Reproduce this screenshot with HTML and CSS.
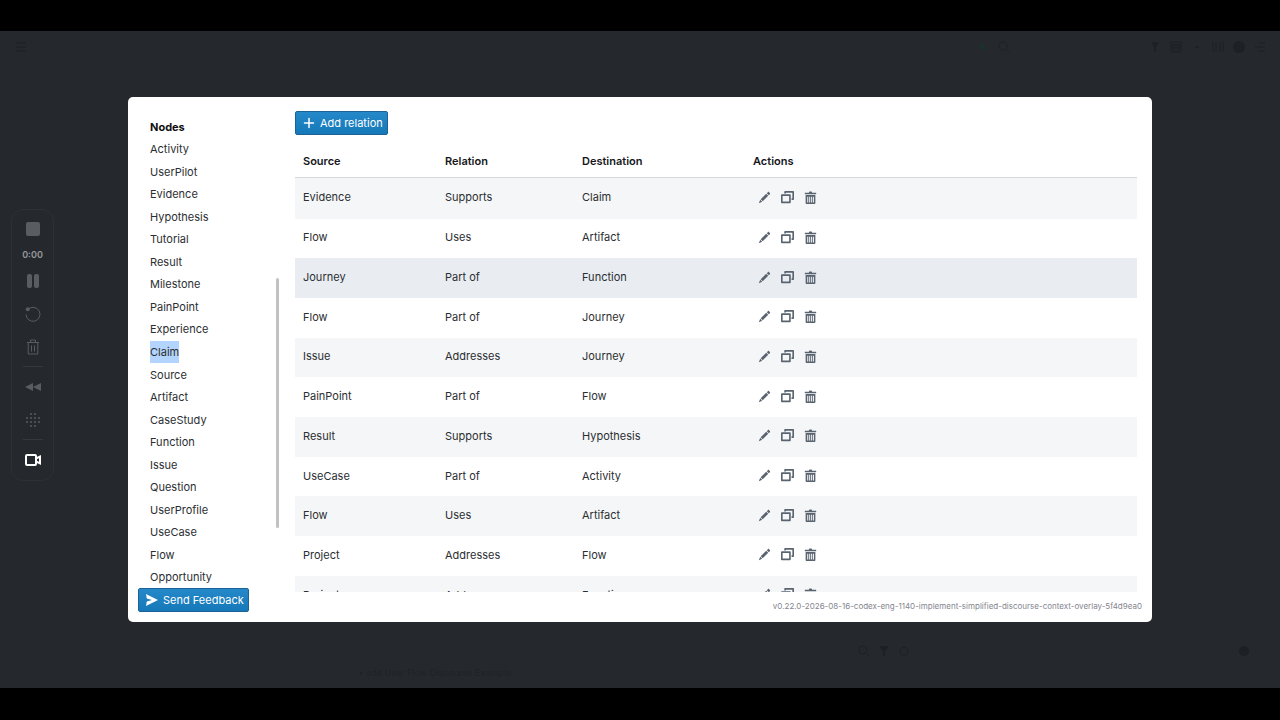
FILE: index.html
```html
<!DOCTYPE html>
<html lang="en">
<head>
    <meta charset="UTF-8">
    <meta name="viewport" content="width=device-width, initial-scale=1.0">
    <link rel="stylesheet" href="styles.css">
    <title>Discourse Graph Settings</title>
</head>
<body>
    <!-- icon shapes, used with <use> below -->
    <svg class="sprite" aria-hidden="true">
        <symbol id="i-pencil" viewBox="0 0 16 16">
            <path d="M3.3 10.2l6.8-6.8 2.5 2.5-6.8 6.8zM1 15l1.7-4.2 2.5 2.5zM13.3 5.2l1.3-1.3c.5-.5.4-1.1 0-1.5l-1-1c-.4-.4-1-.5-1.5 0l-1.3 1.3z"/>
        </symbol>
        <symbol id="i-copy" viewBox="0 0 16 16">
            <path d="M15 0H5c-.6 0-1 .4-1 1v2h2V2h8v7h-1v2h2c.6 0 1-.4 1-1V1c0-.6-.4-1-1-1zm-4 4H1c-.6 0-1 .4-1 1v9c0 .6.4 1 1 1h10c.6 0 1-.4 1-1V5c0-.6-.4-1-1-1zm-1 9H2V6h8v7z"/>
        </symbol>
        <symbol id="i-trash" viewBox="0 0 16 16">
            <path fill-rule="evenodd" d="M14.5 2H10c0-.8-.7-1.500-1.500-1.500h-1C6.700.5 6 1.200 6 2H1.500c-.3 0-.5.2-.5.5V4h14V2.500c0-.3-.2-.5-.5-.5zM2 5v10c0 .6.4 1 1 1h10c.6 0 1-.4 1-1V5zm3.200 9H4V7h1.200zm2.400 0H6.400V7h1.200zm2.400 0H8.800V7H10zm2.200 0H11V7h1.200z"/>
        </symbol>
    </svg>

    <div class="app">
        <header class="topbar">
            <svg viewBox="0 0 12 12"><path d="M1 2h10M1 6h10M1 10h10"/></svg>
            <div class="top_icons">
                <i class="sync"></i>
                <svg class="search" viewBox="0 0 14 14"><circle cx="6" cy="6" r="5"/><path d="M10 10l3 3"/></svg>
                <svg viewBox="0 0 12 12"><path class="fill" d="M2 1h8L7 6v5H5V6z"/></svg>
                <svg viewBox="0 0 12 12"><path d="M1 1h10v10H1zM1 4h10M1 7h10M4 4v7M8 4v7"/></svg>
                <svg viewBox="0 0 12 12"><path class="fill" d="M4 6h1V5h2v1h1v1H4z"/></svg>
                <svg viewBox="0 0 12 12"><path d="M1 1v10M4 1v10M8 1v10M11 1v10"/></svg>
                <svg viewBox="0 0 12 12"><circle class="fill" cx="6" cy="6" r="6"/></svg>
                <svg viewBox="0 0 12 12"><path d="M4 2h7M1 6h10M4 10h7"/></svg>
            </div>
        </header>

        <div class="recorder">
            <button aria-label="Stop"><svg viewBox="0 0 16 16"><rect class="fill" x="1" y="1" width="14" height="14" rx="2"/></svg></button>
            <span class="time">0:00</span>
            <button aria-label="Pause"><svg viewBox="0 0 16 16"><rect class="fill" x="2" y="1" width="5" height="14" rx="2"/><rect class="fill" x="9" y="1" width="5" height="14" rx="2"/></svg></button>
            <button aria-label="Restart"><svg viewBox="0 0 16 16"><path d="M3.200 3.200A7 7 0 1 1 1 8.500"/><circle class="fill" cx="2.800" cy="3.200" r="2"/></svg></button>
            <button aria-label="Delete"><svg viewBox="0 0 16 16"><path d="M2 3.500h12M5.500 3.500V1h5v2.500M3.200 3.500V15h9.600V3.500M6.500 6.500v6M9.500 6.500v6"/></svg></button>
            <hr>
            <button aria-label="Rewind"><svg viewBox="0 0 16 16"><path class="fill" d="M8 4v8L0 8zM16 4v8L8 8z"/></svg></button>
            <button aria-label="Blur"><svg class="dots" viewBox="0 0 16 16"><path d="M6 2h0M10 2h0M2 6h0M6 6h0M10 6h0M14 6h0M2 10h0M6 10h0M10 10h0M14 10h0M6 14h0M10 14h0"/></svg></button>
            <hr>
            <button class="camera" aria-label="Camera"><svg viewBox="0 0 16 16"><rect x="1" y="3" width="10" height="10" rx="1"/><path d="M11 6.500l4-2v7l-4-2z"/></svg></button>
        </div>

        <div class="dialog" role="dialog" aria-label="Settings">
            <div class="panes">
                <nav class="sidebar">
                    <h2>Nodes</h2>
                    <a href="#">Activity</a>
                    <a href="#">UserPilot</a>
                    <a href="#">Evidence</a>
                    <a href="#">Hypothesis</a>
                    <a href="#">Tutorial</a>
                    <a href="#">Result</a>
                    <a href="#">Milestone</a>
                    <a href="#">PainPoint</a>
                    <a href="#">Experience</a>
                    <a href="#" class="selected">Claim</a>
                    <a href="#">Source</a>
                    <a href="#">Artifact</a>
                    <a href="#">CaseStudy</a>
                    <a href="#">Function</a>
                    <a href="#">Issue</a>
                    <a href="#">Question</a>
                    <a href="#">UserProfile</a>
                    <a href="#">UseCase</a>
                    <a href="#">Flow</a>
                    <a href="#">Opportunity</a>
                    <i class="scroll_thumb"></i>
                </nav>

                <main class="content">
                    <button class="primary">
                        <svg viewBox="0 0 16 16"><path d="M8 2v12M2 8h12" stroke="currentColor" stroke-width="2" stroke-linecap="round"/></svg>
                        Add relation
                    </button>
                    <table>
                        <thead>
                            <tr><th class="source">Source</th><th class="relation">Relation</th><th class="destination">Destination</th><th>Actions</th></tr>
                        </thead>
                        <tbody id="relations"></tbody>
                    </table>
                </main>
            </div>

            <footer>
                <button class="primary">
                    <svg viewBox="0 0 16 16"><path fill="currentColor" d="M0 0l16 8-16 8 1-6 7-2-7-2z"/></svg>
                    Send Feedback
                </button>
                <span class="version">v0.22.0-2026-08-16-codex-eng-1140-implement-simplified-discourse-context-overlay-5f4d9ea0</span>
            </footer>
        </div>

        <div class="block_text">• add User Flow Discourse Example</div>
        <div class="bottombar">
            <svg viewBox="0 0 12 12"><circle cx="5" cy="5" r="4"/><path d="M8 8l3 3"/></svg>
            <svg viewBox="0 0 12 12"><path class="fill" d="M1 1h10L7 6v5H5V6z"/></svg>
            <svg viewBox="0 0 12 12"><circle cx="6" cy="6" r="4"/></svg>
            <svg class="help" viewBox="0 0 12 12"><circle class="fill" cx="6" cy="6" r="5"/></svg>
        </div>
    </div>

    <script>
        const relations=[
            ['Evidence','Supports','Claim'],
            ['Flow','Uses','Artifact'],
            ['Journey','Part of','Function'],
            ['Flow','Part of','Journey'],
            ['Issue','Addresses','Journey'],
            ['PainPoint','Part of','Flow'],
            ['Result','Supports','Hypothesis'],
            ['UseCase','Part of','Activity'],
            ['Flow','Uses','Artifact'],
            ['Project','Addresses','Flow'],
            ['Project','Addresses','Function']
        ]

        const icon=(name,label)=>`<button aria-label="${label}"><svg viewBox="0 0 16 16"><use href="#i-${name}"/></svg></button>`

        document.getElementById('relations').innerHTML=relations.map((r,i)=>
            `<tr${i===2 ? ' class="hovered"' : ''}>
                <td>${r[0]}</td><td>${r[1]}</td><td>${r[2]}</td>
                <td><div class="actions">${icon('pencil','Edit')}${icon('copy','Duplicate')}${icon('trash','Delete')}</div></td>
            </tr>`).join('')
    </script>
</body>
</html>
```
FILE: styles.css
```css
*{
    box-sizing: border-box;
}
body{
    margin: 0;
    height: 100vh;
    padding: 31px 0 32px;
    background: #000;
    font-family: Inter, "Liberation Sans", sans-serif;
    font-size: 11px;
    line-height: 16px;
    color: #2b2e32;
}
button{
    font: inherit;
    border: none;
    background: none;
    padding: 0;
    cursor: pointer;
}
.sprite{
    display: none;
}
.app{
    position: relative;
    height: 100%;
    display: flex;
    align-items: center;
    justify-content: center;
    background: #25292d;
    overflow: hidden;
}

/* dimmed app behind the dialog */
.topbar{
    position: absolute;
    top: 10px;
    left: 15px;
    right: 14px;
    display: flex;
    justify-content: space-between;
}
.topbar svg, .bottombar svg{
    width: 12px;
    height: 12px;
    fill: none;
    stroke: #1d2024;
}
.topbar .fill, .bottombar .fill{
    fill: #1d2024;
    stroke: none;
}
.top_icons{
    display: flex;
    align-items: center;
    gap: 9px;
}
.sync{
    width: 6px;
    height: 6px;
    border-radius: 50%;
    background: #1c302c;
    margin-right: 4px;
}
.top_icons .search{
    margin-right: 130px;
}
.bottombar{
    position: absolute;
    bottom: 31px;
    left: 67%;
    right: 30px;
    display: flex;
    gap: 8px;
}
.bottombar .help{
    margin-left: auto;
}
.block_text{
    position: absolute;
    left: 28%;
    bottom: 7px;
    font-size: 9px;
    color: #1f2226;
}

.recorder{
    position: absolute;
    left: 11px;
    top: 178px;
    width: 43px;
    padding: 2px 0 4px;
    display: flex;
    flex-direction: column;
    align-items: center;
    border: 1px solid #2d3034;
    border-radius: 12px;
    color: #595c60;
}
.recorder button{
    height: 33px;
    color: inherit;
}
.recorder svg{
    display: block;
    width: 16px;
    height: 16px;
    fill: none;
    stroke: currentColor;
}
.recorder .fill{
    fill: currentColor;
    stroke: none;
}
.recorder .dots{
    stroke-width: 2;
    stroke-linecap: round;
}
.recorder .camera{
    color: #fff;
}
.recorder .camera svg{
    stroke-width: 2;
}
.recorder hr{
    width: 20px;
    margin: 3px 0;
    border: none;
    border-top: 1px solid #35383c;
}
.time{
    margin: 2px 0 1px;
    font-size: 9px;
    font-weight: 600;
    color: #96989b;
}

.dialog{
    width: 80%;
    height: 80%;
    display: flex;
    flex-direction: column;
    background: #fff;
    border-radius: 5px;
    overflow: hidden;
}
.panes{
    flex: 1;
    min-height: 0;
    display: flex;
}
.sidebar{
    position: relative;
    width: 152px;
    margin: 19px 0 4px;
    padding-left: 22px;
    display: grid;
    grid-auto-rows: 1fr;
    align-items: center;
    justify-items: start;
}
.sidebar h2{
    margin: 0;
    font-size: 11px;
    font-weight: 700;
    color: #111;
}
.sidebar a{
    color: inherit;
    text-decoration: none;
}
.sidebar .selected{
    line-height: 22px;
    background: #b3d4fc;
}
.scroll_thumb{
    position: absolute;
    top: 162px;
    right: 1px;
    width: 3px;
    height: 53%;
    border-radius: 2px;
    background: #c2c2c2;
}
.content{
    flex: 1;
    padding: 14px 15px 0;
    overflow: hidden;
}
.primary{
    display: flex;
    align-items: center;
    gap: 5px;
    height: 24px;
    padding: 0 4px 0 7px;
    border: 1px solid #1a6394;
    border-radius: 2px;
    background: linear-gradient(#2588c8, #1578b8);
    color: #fff;
}
.primary svg{
    width: 12px;
    height: 12px;
    fill: none;
}

table{
    width: 100%;
    height: 471px;
    margin-top: 10px;
    border-collapse: collapse;
    table-layout: fixed;
}
th, td{
    padding: 0 8px;
    text-align: left;
}
td{
    padding-bottom: 2px;
}
th{
    height: 33px;
    border-bottom: 1px solid #d5d6d8;
    font-weight: 600;
    color: #15171a;
}
.source{
    width: 142px;
}
.relation{
    width: 137px;
}
.destination{
    width: 171px;
}
tbody tr:nth-child(odd){
    background: #f5f6f7;
}
tbody .hovered:nth-child(odd){
    background: #e9edf2;
}
.actions{
    display: flex;
    gap: 10px;
    padding-left: 5px;
}
.actions svg{
    display: block;
    width: 13px;
    height: 13px;
    fill: #5a6470;
}

footer{
    display: flex;
    align-items: flex-start;
    justify-content: space-between;
    height: 30px;
    padding: 0 10px;
}
footer .primary{
    margin-top: -4px;
}
.version{
    margin-top: 6px;
    font-size: 8px;
    color: #84868f;
}
```
